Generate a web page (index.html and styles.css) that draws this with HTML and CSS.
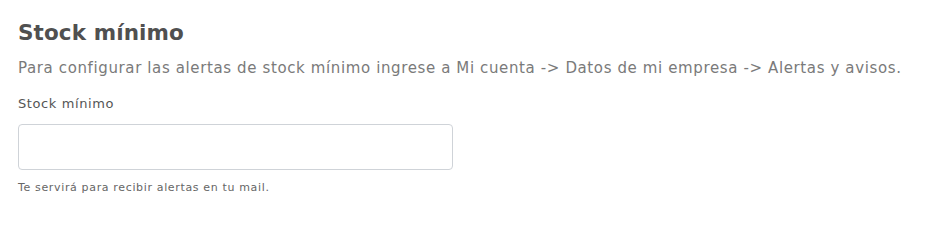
FILE: index.html
```html
<!DOCTYPE html>
<html lang="es">
<head>
<meta charset="utf-8">
<link rel="stylesheet" href="styles.css">
</head>
<body>
<section class="panel">
  <h2 class="title">Stock mínimo</h2>
  <p class="desc">Para configurar las alertas de stock mínimo ingrese a Mi cuenta -&gt; Datos de mi empresa -&gt; Alertas y avisos.</p>
  <div class="field">
    <label class="label" for="stock">Stock mínimo</label>
    <input class="input" id="stock" type="text">
    <p class="help">Te servirá para recibir alertas en tu mail.</p>
  </div>
</section>
</body>
</html>
```
FILE: styles.css
```css
html, body {
  margin: 0;
  padding: 0;
  background: #ffffff;
}
body {
  font-family: "DejaVu Sans", sans-serif;
}
.panel {
  padding: 19px 18px 0 18px;
}
.title {
  margin: 0;
  font-size: 21.5px;
  line-height: 28px;
  font-weight: 700;
  letter-spacing: 0.1px;
  color: #505050;
}
.desc {
  margin: 10px 0 0 0;
  font-size: 15px;
  line-height: 22px;
  letter-spacing: 0.62px;
  color: #7a7a7a;
}
.field {
  margin-top: 16px;
  display: flex;
  flex-direction: column;
}
.label {
  font-size: 13px;
  line-height: 18px;
  letter-spacing: 0.6px;
  color: #555555;
}
.input {
  box-sizing: border-box;
  margin-top: 11px;
  width: 435px;
  height: 46px;
  border: 1px solid #cfd3d8;
  border-radius: 4px;
  background: #fff;
  outline: none;
}
.help {
  margin: 10px 0 0 0;
  font-size: 11px;
  line-height: 16px;
  letter-spacing: 0.65px;
  color: #666666;
}
```
